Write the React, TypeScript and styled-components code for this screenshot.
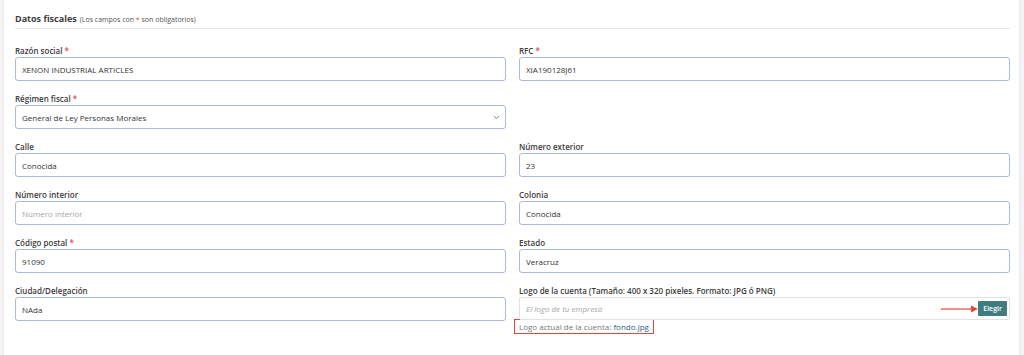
import React from "react";
import styled, { createGlobalStyle } from "styled-components";

const Global = createGlobalStyle`
  html, body { margin: 0; padding: 0; background: #f4f4f5; }
  body { font-family: "Open Sans", "Noto Sans", sans-serif; color: #3a3a3a; }
  * { box-sizing: border-box; }
`;

const Page = styled.div`
  width: 1024px;
  height: 355px;
  padding: 0 4px 0 3px;
  background: #f4f4f5;
`;

const Card = styled.section`
  background: #fff;
  height: 355px;
  border-left: 1px solid #ececec;
  border-right: 1px solid #ececec;
  padding: 12px 9px 0 11px;
`;

const Header = styled.div`
  display: flex;
  align-items: baseline;
  gap: 3px;
  height: 17px;
  border-bottom: 1px solid #e6e6e6;
  font-size: 8.5px;
`;

const Title = styled.span`
  font-weight: 700;
  font-size: 9px;
  color: #404040;
`;

const Hint = styled.span`
  font-size: 7px;
  color: #555;
`;

const Req = styled.span`
  color: #e0473d;
`;

const Grid = styled.div`
  display: grid;
  grid-template-columns: 1fr 1fr;
  column-gap: 13px;
  row-gap: 8px;
  padding-top: 16px;
`;

const Field = styled.div`
  display: flex;
  flex-direction: column;
  min-height: 40px;
`;

const Label = styled.label`
  font-size: 8px;
  font-weight: 600;
  color: #3c3c3c;
  height: 11px;
  line-height: 11px;
  margin-bottom: 1px;
`;

const Input = styled.div<{ $placeholder?: boolean; $italic?: boolean }>`
  height: 24px;
  border: 1px solid #a9bbd9;
  border-radius: 3px;
  display: flex;
  align-items: center;
  padding: 0 6px;
  font-size: 8px;
  color: ${(p) => (p.$placeholder ? "#a5a5a5" : "#333")};
  font-style: ${(p) => (p.$italic ? "italic" : "normal")};
  background: #fff;
`;

const SelectBox = styled(Input)`
  justify-content: space-between;
  padding-right: 5px;
`;

const FileBox = styled(Input)`
  border-color: #e2e2e2;
  border-radius: 2px;
  height: 23px;
  padding-right: 2px;
  justify-content: space-between;
  position: relative;
`;

const Button = styled.span`
  background: #3f7c80;
  color: #fff;
  font-style: normal;
  font-weight: 600;
  font-size: 7px;
  height: 15px;
  padding: 0 5px;
  display: flex;
  align-items: center;
  border-radius: 1px;
`;

const Arrow = styled.svg`
  position: absolute;
  right: 30px;
  top: 7px;
`;

const Current = styled.div`
  align-self: flex-start;
  margin-top: -1px;
  margin-left: -5px;
  border: 1.5px solid #e2483c;
  padding: 1px 4px 1px 4px;
  font-size: 8px;
  color: #777;
  line-height: 11px;
`;

const Link = styled.a`
  color: #2b5f8c;
  text-decoration: none;
`;

const Empty = styled.div``;

export default function App() {
  return (
    <Page>
      <Global />
      <Card>
        <Header>
          <Title>Datos fiscales</Title>
          <Hint>
            (Los campos con <Req>*</Req> son obligatorios)
          </Hint>
        </Header>
        <Grid>
          <Field>
            <Label>
              Razón social <Req>*</Req>
            </Label>
            <Input>XENON INDUSTRIAL ARTICLES</Input>
          </Field>
          <Field>
            <Label>
              RFC <Req>*</Req>
            </Label>
            <Input>XIA190128J61</Input>
          </Field>
          <Field>
            <Label>
              Régimen fiscal <Req>*</Req>
            </Label>
            <SelectBox>
              <span>General de Ley Personas Morales</span>
              <svg width="7" height="5" viewBox="0 0 7 5">
                <path d="M1 1.2 L3.5 3.6 L6 1.2" fill="none" stroke="#666" strokeWidth="0.8" />
              </svg>
            </SelectBox>
          </Field>
          <Empty />
          <Field>
            <Label>Calle</Label>
            <Input>Conocida</Input>
          </Field>
          <Field>
            <Label>Número exterior</Label>
            <Input>23</Input>
          </Field>
          <Field>
            <Label>Número interior</Label>
            <Input $placeholder>Número interior</Input>
          </Field>
          <Field>
            <Label>Colonia</Label>
            <Input>Conocida</Input>
          </Field>
          <Field>
            <Label>
              Código postal <Req>*</Req>
            </Label>
            <Input>91090</Input>
          </Field>
          <Field>
            <Label>Estado</Label>
            <Input>Veracruz</Input>
          </Field>
          <Field>
            <Label>Ciudad/Delegación</Label>
            <Input>NAda</Input>
          </Field>
          <Field>
            <Label>Logo de la cuenta (Tamaño: 400 x 320 pixeles. Formato: JPG ó PNG)</Label>
            <FileBox $placeholder $italic>
              <span>El logo de tu empresa</span>
              <Arrow width="38" height="8" viewBox="0 0 38 8">
                <line x1="0" y1="4" x2="31" y2="4" stroke="#e2483c" strokeWidth="1.2" />
                <path d="M30 0.5 L37 4 L30 7.5 Z" fill="#e2483c" />
              </Arrow>
              <Button>Elegir</Button>
            </FileBox>
            <Current>
              Logo actual de la cuenta: <Link href="#">fondo.jpg</Link>
            </Current>
          </Field>
        </Grid>
      </Card>
    </Page>
  );
}
